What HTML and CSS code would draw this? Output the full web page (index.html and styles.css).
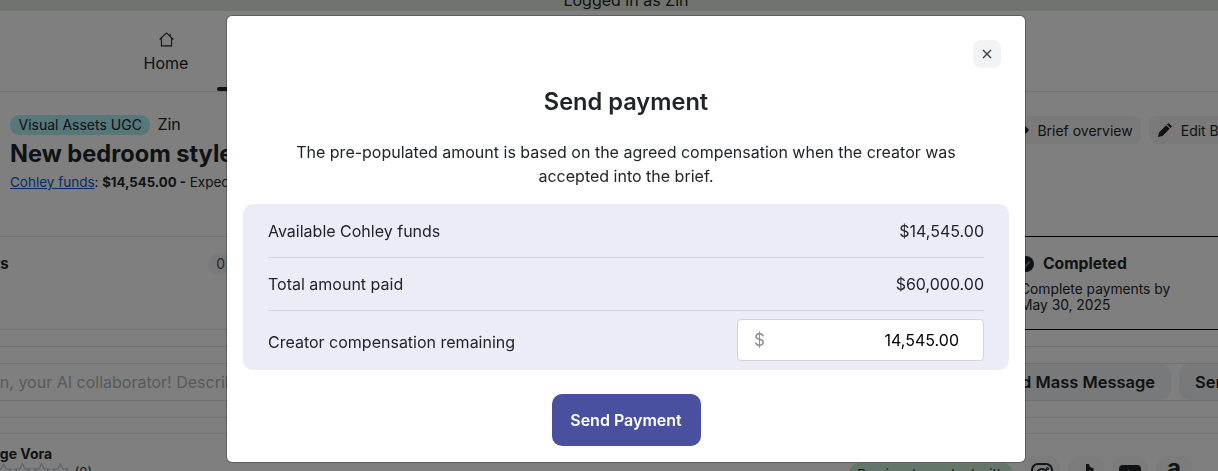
FILE: index.html
```html
<!DOCTYPE html>
<html lang="en">
<head>
<meta charset="utf-8">
<title>Send payment</title>
<link rel="stylesheet" href="styles.css">
</head>
<body>
<div class="page">
  <div class="banner">Logged in as Zin</div>
  <nav class="tabs">
    <div class="tab">
      <svg class="tab-icon" viewBox="0 0 16 16" width="17" height="17" fill="none" stroke="currentColor" stroke-width="1"><path d="M1.500 8 8 1.800 14.500 8M3.200 6.500V14h9.600V6.500M11.500 2.500v2.500"/></svg>
      <span>Home</span>
    </div>
    <div class="tab-active"></div>
  </nav>
  <header class="brief">
    <div class="brief-left">
      <div class="brief-tags"><span class="pill">Visual Assets UGC</span><span class="owner">Zin</span></div>
      <h1>New bedroom style</h1>
      <p class="brief-funds"><a href="#">Cohley funds</a>: <b>$14,545.00 -</b> Expected</p>
    </div>
    <div class="brief-actions">
      <span class="ghost"><svg viewBox="0 0 16 16" width="16" height="16" fill="currentColor"><path d="M0 8c2-3 5-5 8-5s6 2 8 5c-2 3-5 5-8 5s-6-2-8-5Z"/></svg>Brief overview</span>
      <span class="ghost"><svg viewBox="0 0 16 16" width="16" height="16" fill="currentColor"><path d="M11.500 1 15 4.500 13.500 6 10 2.500ZM9.200 3.300 12.700 6.800 5.500 14 1 15 2 10.500Z"/></svg>Edit Brief</span>
    </div>
  </header>
  <section class="stages">
    <div class="stage-left"><b>Payments</b><span class="count">0</span></div>
    <div class="stage-right">
      <div class="stage-head"><svg viewBox="0 0 16 16" width="16" height="16"><circle cx="8" cy="8" r="8" fill="currentColor"/><path d="M4.500 8.200 7 10.600 11.500 5.600" fill="none" stroke="#7f7f7f" stroke-width="1.800"/></svg><b>Completed</b></div>
      <p>Complete payments by<br>May 30, 2025</p>
    </div>
  </section>
  <div class="thin-row"></div>
  <div class="thin-row"></div>
  <div class="ai-row">
    <span class="ai-text">Meet Quinn, your AI collaborator! Describe</span>
    <div class="ai-actions"><span class="solid-btn">Send Mass Message</span><span class="solid-btn">Send</span></div>
  </div>
  <div class="thin-row"></div>
  <div class="thin-row short"></div>
  <div class="creator">
    <div class="creator-left">
      <b>George Vora</b>
      <div class="stars">
        <svg viewBox="0 0 19 18" width="19" height="18"><path class="star" d="M9.500 1.500 12 7h5.500l-4.500 3.500 1.700 6-5.200-3.500-5.200 3.500 1.700-6L1.500 7H7Z"/></svg>
        <svg viewBox="0 0 19 18" width="19" height="18"><path class="star" d="M9.500 1.500 12 7h5.500l-4.500 3.500 1.700 6-5.200-3.500-5.200 3.500 1.700-6L1.500 7H7Z"/></svg>
        <svg viewBox="0 0 19 18" width="19" height="18"><path class="star" d="M9.500 1.500 12 7h5.500l-4.500 3.500 1.700 6-5.200-3.500-5.200 3.500 1.700-6L1.500 7H7Z"/></svg>
        <svg viewBox="0 0 19 18" width="19" height="18"><path class="star" d="M9.500 1.500 12 7h5.500l-4.500 3.500 1.700 6-5.200-3.500-5.200 3.500 1.700-6L1.500 7H7Z"/></svg>
        <svg viewBox="0 0 19 18" width="19" height="18"><path class="star" d="M9.500 1.500 12 7h5.500l-4.500 3.500 1.700 6-5.200-3.500-5.200 3.500 1.700-6L1.500 7H7Z"/></svg>
        <span class="rating">(0)</span>
      </div>
    </div>
    <div class="creator-right">
      <span class="prev">Previously worked with</span>
      <span class="social"><svg viewBox="0 0 22 22" width="22" height="22" fill="none" stroke="currentColor" stroke-width="2"><rect x="1" y="1" width="20" height="20" rx="6"/><circle cx="11" cy="11" r="5"/><circle cx="16.500" cy="5.500" r=".6"/></svg></span>
      <span class="social"><svg viewBox="0 0 22 22" width="22" height="22" fill="currentColor"><path d="M11 1h3c.3 2.500 1.800 4 4.500 4.300v3c-1.700 0-3.200-.5-4.500-1.400V15a6 6 0 1 1-5-6v3.200A3 3 0 1 0 11 15Z"/></svg></span>
      <span class="social"><svg viewBox="0 0 22 22" width="22" height="22" fill="currentColor"><rect x="0" y="2" width="22" height="17" rx="4"/><path d="M9 7v7l5-3.500Z" fill="#fff"/></svg></span>
      <span class="social amazon">a</span>
    </div>
  </div>
</div>
<div class="overlay">
  <div class="modal" role="dialog">
    <div class="modal-top">
      <button class="close" aria-label="Close"><svg viewBox="0 0 10 10" width="10" height="10" fill="none" stroke="currentColor" stroke-width="1.300"><path d="M1 1 9 9M9 1 1 9"/></svg></button>
    </div>
    <h2>Send payment</h2>
    <p class="lede">The pre-populated amount is based on the agreed compensation when the creator was accepted into the brief.</p>
    <div class="summary">
      <div class="summary-row first"><span>Available Cohley funds</span><span>$14,545.00</span></div>
      <div class="summary-row"><span>Total amount paid</span><span>$60,000.00</span></div>
      <div class="summary-row last"><span class="last-label">Creator compensation remaining</span>
        <div class="amount"><span class="dollar">$</span><span>14,545.00</span></div>
      </div>
    </div>
    <div class="modal-foot"><button class="send">Send Payment</button></div>
  </div>
</div>
</body>
</html>
```
FILE: styles.css
```css
* { box-sizing: border-box; }
html, body { margin: 0; height: 471px; overflow: hidden; }
body { font-family: Inter, "Liberation Sans", sans-serif; color: #212529; background: #fff; }
p, h1, h2 { margin: 0; }

.page { height: 471px; overflow: hidden; }
.banner { height: 11px; background: #e0e6df; line-height: 0; padding: 0 0 0 34px; text-align: center; font-size: 16px; overflow: hidden; }
.tabs { height: 81px; border-bottom: 1px solid #dee2e6; padding-left: 132px; display: flex; }
.tab { width: 68px; display: flex; flex-direction: column; align-items: center; padding-top: 20px; gap: 5px; font-size: 16px; }
.tab-icon { display: block; }
.tab-active { width: 80px; height: 4px; background: #212529; border-radius: 2px; margin: 76px 0 0 17px; }

.brief { height: 144px; padding: 23px 8px 0 10px; display: flex; justify-content: space-between; }
.brief-tags { display: flex; gap: 7px; font-size: 16px; align-items: flex-start; height: 20px; }
.owner { line-height: 18px; }
.pill { background: #aef0f5; border-radius: 9px; padding: 0 8.500px; font-size: 14px; line-height: 20px; }
h1 { font-size: 23.600px; font-weight: 700; line-height: 30px; margin-top: 4px; white-space: nowrap; }
.brief-funds { font-size: 13.500px; line-height: 17px; margin-top: 5px; white-space: nowrap; }
.brief-funds a { color: #0a58ca; }
.brief-funds b { font-size: 13.200px; }
.brief-actions { display: flex; gap: 8px; margin-top: 1px; height: 28px; font-size: 14px; white-space: nowrap; margin-right: -39px; }
.ghost { display: flex; align-items: center; gap: 8px; background: #f5f5f5; border-radius: 8px; padding: 0 8px; }

.stages { height: 94px; display: flex; justify-content: space-between; border-top: 1px solid #dee2e6; border-bottom: 1px solid #dee2e6; }
.stage-left { margin-left: -64px; width: 297px; padding-top: 17px; display: flex; justify-content: space-between; align-items: flex-start; font-size: 15px; line-height: 20px; }
.count { background: #f1f3f5; border-radius: 10px; padding: 0 8px; line-height: 20px; font-size: 14px; color: #495057; }
.stage-right { width: 198px; font-size: 13.800px; padding-top: 17px; margin: -1px 0; border-top: 1px solid #000; border-bottom: 1px solid #000; }
.stage-head { display: flex; align-items: center; gap: 9px; font-size: 15.700px; line-height: 20px; margin-left: -2px; }
.stage-right p { line-height: 16px; margin: 7px 0 0 0; }

.thin-row { height: 17px; border-bottom: 1px solid #dee2e6; }
.thin-row.short { height: 16px; border-bottom-color: #e9ecef; }
.ai-row { height: 37px; display: flex; justify-content: space-between; align-items: center; border-bottom: 1px solid #dee2e6; white-space: nowrap; font-size: 16px; color: #adb5bd; }
.ai-text { margin-left: -78px; }
.ai-actions { display: flex; gap: 8px; margin-right: -34px; }
.solid-btn { background: #f1f3f5; color: #212529; font-weight: 600; font-size: 16.500px; border-radius: 10px; padding: 0 16px; line-height: 36px; }

.creator { display: flex; justify-content: space-between; }
.creator-left { margin-left: -33px; padding-top: 11px; font-size: 14px; line-height: 17px; white-space: nowrap; }
.stars { display: flex; align-items: flex-start; margin: 0 0 0 7.500px; }
.star { fill: none; stroke: #adb5bd; stroke-width: 1; }
.rating { font-size: 13px; margin: 2px 0 0 5px; }
.creator-right { display: flex; align-items: flex-start; padding: 22px 26px 0 0; }
.prev { background: #c9ecd2; border-radius: 10px; padding: 0 8px; font-size: 13.500px; line-height: 22px; margin: 7px 11px 0 0; white-space: nowrap; }
.social { width: 36px; height: 36px; background: #f8f9fa; border-radius: 10px; display: flex; justify-content: center; padding-top: 7px; margin-right: 8px; }
.social.amazon { margin-right: 0; font-weight: 700; font-size: 24px; line-height: 24px; padding-top: 0; }

.overlay { position: fixed; inset: 0; background: rgba(0,0,0,.5); display: flex; justify-content: center; align-items: flex-start; }
.modal { width: 798px; height: 446px; margin: 16px 0 0 34px; background: #fff; border-radius: 5px; padding: 24px 16px 0; box-shadow: 0 0 0 1px rgba(0,0,0,.25); }
.modal-top { display: flex; justify-content: flex-end; height: 28px; padding-right: 8px; }
.close { width: 28px; height: 28px; border: 0; border-radius: 8px; background: #f1f3f5; color: #343a40; display: flex; align-items: center; justify-content: center; padding: 0; }
h2 { font-size: 23.600px; font-weight: 600; line-height: 29px; text-align: center; margin-top: 19px; }
.lede { font-size: 16px; line-height: 24px; text-align: center; width: 700px; margin: 24px auto 0; }
.summary { margin-top: 16px; background: #ebecf5; border-radius: 10px; padding: 0 25px; height: 166px; }
.summary-row { display: flex; justify-content: space-between; align-items: center; height: 53px; border-bottom: 1px solid #d5d6dc; font-size: 16px; }
.summary-row.first { height: 54px; }
.summary-row.last { border-bottom: 0; height: 59px; align-items: flex-start; padding-top: 8px; }
.last-label { padding-top: 13px; }
.amount { width: 247px; height: 42px; background: #fff; border: 1px solid #ced4da; border-radius: 4px; display: flex; justify-content: space-between; align-items: center; padding: 0 24px 0 16px; color: #000; }
.dollar { color: #8c8c8c; font-size: 17px; }
.modal-foot { display: flex; justify-content: center; margin-top: 24px; }
.send { width: 149px; height: 52px; border: 0; border-radius: 10px; background: #4a50a0; color: #fff; font: 600 16px Inter, "Liberation Sans", sans-serif; }
```
